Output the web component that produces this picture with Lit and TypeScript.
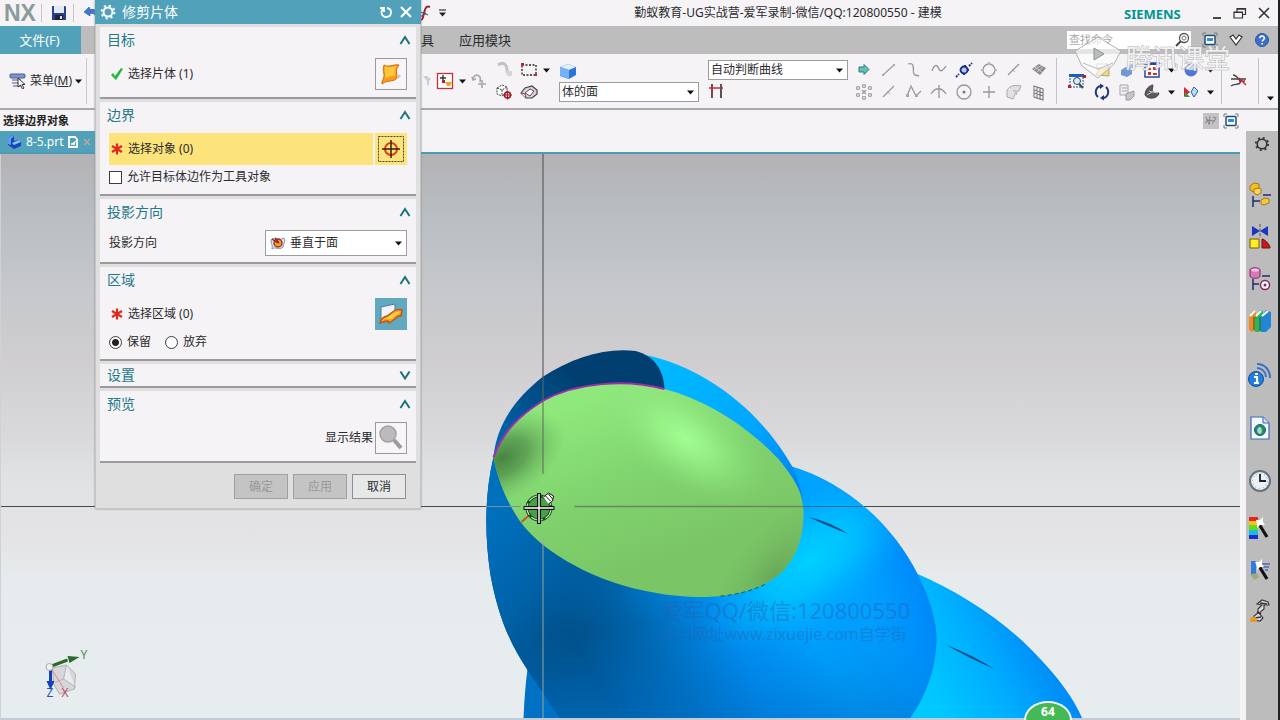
import { LitElement, html, svg, css, TemplateResult } from "lit";
import { customElement } from "lit/decorators.js";

type Glyph = [number, number, TemplateResult];

const glyphs: Record<string, Glyph> = {
  save: [16, 16, svg`<path d="M1 1h13l1 1v13H1z" fill="#2b3f8f"/><path d="M3 1h10v7H3z" fill="#e4e8f4"/><path d="M4 10h8v5H4z" fill="#1c2238"/><path d="M9 11h2v3H9z" fill="#dfe3ee"/>`],
  undo: [18, 16, svg`<path d="M6 2 1 7l6 4V8.500c4-.5 6 1 6 6 5-7 1-11-6-10z" fill="#3d78cf" stroke="#2a56a5" stroke-width=".6"/>`],
  script: [14, 18, svg`<path d="M1 16c4 1 4-3 5-7s2-8 6-6" fill="none" stroke="#a81e2c" stroke-width="2"/><path d="M3 8l7 3M2 13l6-4" stroke="#555" stroke-width="1.200"/>`],
  qcaret: [9, 8, svg`<path d="M1 1h7" stroke="#333" stroke-width="1.200"/><path d="M1 3.500h7L4.500 7.500z" fill="#222"/>`],
  caret: [7, 5, svg`<path d="M0 .5h7L3.500 4.500z" fill="#111"/>`],
  min: [12, 14, svg`<path d="M2 12h8" stroke="#333" stroke-width="1.800"/>`],
  restore: [14, 14, svg`<path d="M1 6h8.500v6H1zM4 6V2.500h8.500v6H10M1 6.500h8M4 3.200h8" fill="none" stroke="#333" stroke-width="1.200"/>`],
  close: [14, 14, svg`<path d="m2 2 10 10M12 2 2 12" stroke="#333" stroke-width="1.600"/>`],
  search: [16, 16, svg`<circle cx="10" cy="6" r="4.500" fill="#fff" stroke="#555" stroke-width="1.300"/><circle cx="10" cy="6" r="2" fill="none" stroke="#777"/><path d="m7 9-5 5" stroke="#444" stroke-width="2"/>`],
  full: [16, 16, svg`<path d="M1 4V1h3M12 1h3v3M15 12v3h-3M4 15H1v-3" fill="none" stroke="#777"/><rect x="3" y="3.500" width="10" height="9" rx="1" fill="#fff" stroke="#234a6d" stroke-width="1.500"/><path d="M5 6h6v3H5z" fill="#2b8be6"/>`],
  chevron: [16, 14, svg`<path d="m2 4 3-2 3 4 3-4 3 2-6 8z" fill="#fff" stroke="#333" stroke-width="1.200"/>`],
  help: [16, 16, svg`<circle cx="8" cy="8" r="6.500" fill="#3b6fc9" stroke="#2a55a5"/><path d="M5.800 6.300c0-3 4.600-3 4.600-.2 0 1.700-2.200 1.700-2.200 3.500M8.200 11v1.600" fill="none" stroke="#fff" stroke-width="1.600"/>`],
  menu: [18, 16, svg`<rect x="1" y="1" width="15" height="4" rx="1" fill="#7d93c9" stroke="#4b5f94"/><path d="M3 7h9M3 10h8M4 13h8" stroke="#8f8aa5" stroke-width="1.500"/><path d="M9 5v9l2.500-2 2 4 1.500-1-2-3.500h3z" fill="#fff" stroke="#222" stroke-width=".9"/>`],
  partcube: [16, 16, svg`<path d="M2 4l4-3 2 1v5l5-1 2 2v4l-7 3-6-4z" fill="#1747b8"/><path d="m2 4 4-3 2 1-3 3v6l-3-1z" fill="#5e9bf0"/><path d="m6 9 7-3 2 2-7 3z" fill="#8fbcfb"/>`],
  edit: [12, 12, svg`<path d="M2 1h6l2 2v8H2z" fill="none" stroke="#fff" stroke-width="1.800"/><path d="m5 8 6-4M4 8h4" stroke="#fff" stroke-width="1.400"/>`],
  tabx: [8, 10, svg`<path d="m1 2 6 6M7 2 1 8" stroke="#b6a79f" stroke-width="1.500"/>`],
  snap: [18, 18, svg`<rect x="1.500" y="1.500" width="15" height="15" fill="#fff" stroke="#c3323c" stroke-width="1.300"/><path d="M4 6h6M7 3v6" stroke="#333" stroke-width="1.400"/><path d="M9 10h7l-2 4h-3z" fill="#efa522"/><path d="M6 8h3v3H6z" fill="#b32230"/>`],
  funnel: [10, 14, svg`<path d="M0 2h4l4 3-2 2v5l-2-2V7z" fill="#cfcdd2"/>`],
  arcplus: [18, 18, svg`<path d="M2 7c1-6 9-5 7 3" fill="none" stroke="#a8a6ab" stroke-width="1.600"/><path d="M11 8v8M7 12h8M1 5l1 3 3-1" stroke="#a8a6ab" stroke-width="1.600" fill="none"/>`],
  arcgrey: [18, 18, svg`<path d="M3 4c6-4 10 0 9 8" fill="none" stroke="#c3c1c6" stroke-width="3"/><path d="M11 10h6v5h-5z" fill="#d6d4d9"/>`],
  cubetarget: [18, 18, svg`<path d="m2 5 5-3 5 2v6l-5 3-5-2zM2 5l5 2 5-3M7 7v6" fill="#fff" stroke="#444" stroke-width="1" stroke-dasharray="2 1"/><circle cx="12.500" cy="12" r="3" fill="none" stroke="#a31a2a" stroke-width="1.600"/><path d="M12.500 7.500v9M8 12h9" stroke="#a31a2a" stroke-width="1.200"/>`],
  selrect: [18, 18, svg`<path d="M2 4h14v10H2z" fill="none" stroke="#222" stroke-width="1.300" stroke-dasharray="2 1.500"/><path d="M1 2h3v3H1zM14 13h3v2h-3z" fill="#b82532"/>`],
  solid: [18, 18, svg`<path d="M1 10 5 5l7-2 5 4v4l-5 4H6z" fill="#d8d6da" stroke="#444" stroke-width="1.200"/><path d="m5 10 5-4 4 2-4 5zM1 10l4 1 1 4" fill="#fff" stroke="#7c3a46"/>`],
  bluecube: [18, 18, svg`<path d="m1 5 8-3 8 3v8l-7 4-9-3z" fill="#2d74d8"/><path d="m1 5 8-3 8 3-7 3z" fill="#e1effc"/><path d="m1 5 9 3v9l-9-3z" fill="#76b2f5"/>`],
  hh: [16, 16, svg`<path d="M4 1v14M13 1v14" stroke="#444" stroke-width="1.800"/><path d="M4 4v8M1 5h14" stroke="#c0303c" stroke-width="1.400"/>`],
  arrow: [18, 18, svg`<path d="M4 6h5V3.500l5 5-5 5V11H4z" fill="#63bfb7" stroke="#2c7d7b"/>`],
  line: [18, 18, svg`<path d="m3 14 11-10" stroke="#9c9a9e" stroke-width="1.200"/><path d="M2 13h2v2H2zM13 3h2v2h-2z" fill="#aaa"/>`],
  line2: [18, 18, svg`<path d="m3 14 11-11" stroke="#9c9a9e" stroke-width="1.300"/><path d="m7 8 3 3" stroke="#aaa"/>`],
  scurve: [18, 18, svg`<path d="M3 3c9-3 3 10 7 11l4 1" fill="none" stroke="#98969a" stroke-width="1.300"/>`],
  wave: [18, 18, svg`<path d="M2 10C5 1 8 5 9 8s4 2 7-3" fill="none" stroke="#98969a" stroke-width="1.400"/>`],
  zig: [18, 18, svg`<path d="M2 13 6 3l5 10 5-5" fill="none" stroke="#98969a" stroke-width="1.300"/><path d="M1 11h3v3H1zM10 11h3v3h-3zM5 3h2v2H5z" fill="#aaa8ac"/>`],
  arcplus2: [18, 18, svg`<path d="M1 11c4-7 11-7 15 0M9 2v13" fill="none" stroke="#98969a" stroke-width="1.300"/>`],
  spiro: [18, 18, svg`<circle cx="9" cy="9" r="3.500" fill="#aecbe7" stroke="#1d2a8c" stroke-width="1.800"/><path d="m5 9 5-5 4 5-5 5z" fill="none" stroke="#1d2a8c"/><path d="m1 16 3-3M14 5l3-3" stroke="#1d2a8c" stroke-width="2" stroke-dasharray="2 1" fill="none"/>`],
  circle: [18, 18, svg`<circle cx="9" cy="9" r="6" fill="none" stroke="#98969a" stroke-width="1.300"/><path d="M8 1h2v3H8zM1 8h3v2H1zM14 8h3v2h-3zM8 14h2v3H8z" fill="#bbb9bd"/>`],
  circledot: [18, 18, svg`<circle cx="9" cy="9" r="7" fill="none" stroke="#98969a" stroke-width="1.300"/><circle cx="9" cy="9" r="1.500" fill="#777"/>`],
  plus: [18, 18, svg`<path d="M9 3v12M3 9h12" stroke="#98969a" stroke-width="1.300"/>`],
  burst: [18, 18, svg`<g fill="none" stroke="#98969a" stroke-width="1.200"><path d="m7 7 4 4M11 7l-4 4"/><circle cx="3" cy="5" r="1.500"/><circle cx="9" cy="3" r="1.500"/><circle cx="15" cy="5" r="1.500"/><circle cx="3" cy="12" r="1.500"/><circle cx="9" cy="15" r="1.500"/><circle cx="15" cy="12" r="1.500"/></g>`],
  surf: [18, 18, svg`<path d="m2 8 7-5 7 4-6 7z" fill="#8b898d"/><path d="m4 9 8-5M7 11l7-6M5 6l7 5" stroke="#cfcdd2"/>`],
  surfcurl: [18, 18, svg`<path d="M2 7c4-5 8-5 14-4l-2 5c-3-1-4 4-6 8l-6-2z" fill="#e2e0e4" stroke="#a9a7ab"/><path d="M8 8c3-1 5 2 3 4" fill="none" stroke="#a9a7ab"/>`],
  mesh: [18, 18, svg`<path d="M4 3l9 3v11l-9-3zM4 7l9 3M4 10l9 3M7 4v11M10 5v11" fill="none" stroke="#7c7a7e" stroke-width="1.100"/>`],
  fitwin: [18, 18, svg`<path d="M2 3h13v12H2z" fill="#eef5fb" stroke="#2a4a8e" stroke-dasharray="2 1"/><path d="M1 2h15v3H1z" fill="#1f5fbc"/><circle cx="9" cy="9" r="3.500" fill="#d7ecf8" stroke="#344"/><path d="m11 12 4 4" stroke="#344" stroke-width="1.800"/><path d="M0 13h3v3H0zM15 3h3v3h-3z" fill="#b9202e"/>`],
  folder: [18, 18, svg`<path d="m3 14 5-9h8v10z" fill="#efd986" stroke="#b7a46a"/><path d="M4 3h10v4H4z" fill="#fff" stroke="#aaa"/>`],
  refresh: [18, 18, svg`<path d="M5 14A6.500 6.500 0 0 1 7 3M13 4a6.500 6.500 0 0 1-2 11" fill="none" stroke="#22387c" stroke-width="1.900"/><path d="m7 .5 4 2.500-4 3zM11 12l-4 3 4 2.500z" fill="#22387c"/>`],
  bluebox: [18, 18, svg`<path d="m3 9 5-3 6 2v5l-5 3-6-2z" fill="#7198d5"/><path d="m9 5 5-2 2 1v4l-3 2z" fill="#a7c1e8"/>`],
  sheets: [18, 18, svg`<path d="M2 2h8v10H2zM4 5h5M4 8h5" fill="#eee" stroke="#a5a3a8"/><path d="m8 11 8-3v5l-4 4H8z" fill="#c7c5ca" stroke="#9b999e"/>`],
  redgrid: [18, 18, svg`<path d="M2 2h14v14H2z" fill="#fff" stroke="#27479d" stroke-width="1.500"/><path d="M2 3h14" stroke="#27479d" stroke-width="2"/><path d="M4 7h4v2H4zM10 6h4v3h-4zM5 11h3v3H5zM10 12h4v2h-4z" fill="#cf2e3a"/>`],
  fan: [18, 18, svg`<path d="M2 12C2 6 7 2 10 2l-1 7 7 1c-1 6-11 7-14 2z" fill="#5c5a5e" stroke="#333" stroke-width=".8"/><path d="m4 12 5-3 6 1M6 8l3 1" stroke="#c9c7cb" fill="none"/>`],
  sphere: [18, 18, svg`<circle cx="9" cy="9" r="6.500" fill="#5276d8"/><path d="M3 7c4-5 9-5 12 0-4 3-8 3-12 0z" fill="#c8d8f8"/>`],
  compare: [18, 18, svg`<path d="m2 4 6 5-6 5z" fill="#c92c33"/><path d="m3 9 5 5H3z" fill="#2a9d4a"/><path d="m12 4 4 4-4 6-3-5z" fill="#b8dcf4" stroke="#2360a8"/>`],
  trim: [18, 18, svg`<path d="M4 3c4 0 5 4 8 7M2 7h9l6 0M2 14c4-3 7 0 10-4" fill="none" stroke="#444" stroke-width="1.400"/><path d="m10 6 7 7M16 9l-6 0" stroke="#c2252f" stroke-width="1.400"/>`],
  noise: [16, 16, svg`<path d="M0 0h16v16H0z" fill="#c4c2c6"/><path d="m3 4 3 7M7 3l-1 9M10 4l3 1-4 6M3 7l9 1M2 10l4-3" stroke="#858387" fill="none"/>`],
  gearDark: [18, 18, svg`<circle cx="9" cy="9" r="4.800" fill="none" stroke="#333" stroke-width="1.600"/><circle cx="9" cy="9" r="6.200" fill="none" stroke="#333" stroke-width="1.800" stroke-dasharray="2 2.870"/>`],
  gear: [16, 16, svg`<circle cx="8" cy="8" r="4.500" fill="none" stroke="#fff" stroke-width="2"/><circle cx="8" cy="8" r="6.400" fill="none" stroke="#fff" stroke-width="2" stroke-dasharray="2.200 2.826"/>`],
  reset: [14, 14, svg`<path d="M1 3h4v4M4 4c-3 3-1 8 3 8 6 0 7-8 1-9" fill="none" stroke="#fff" stroke-width="1.800"/>`],
  closeW: [14, 14, svg`<path d="m2 2 10 10M12 2 2 12" stroke="#fff" stroke-width="2.200"/>`],
  up: [12, 10, svg`<path d="m1.500 9 4.500-7 4.500 7" fill="none" stroke="#19727e" stroke-width="2"/>`],
  down: [12, 10, svg`<path d="m1.500 1.500 4.500 7 4.500-7" fill="none" stroke="#19727e" stroke-width="2"/>`],
  check: [14, 14, svg`<path d="m1 8 2-2 2 3 6-8 2 1-7 11z" fill="#22b93c"/>`],
  star: [14, 14, svg`<path d="M7 1.500v11M2 4l10 6M12 4 2 10" stroke="#e0281f" stroke-width="2.200"/>`],
  sheet: [26, 26, svg`<path d="M6 4c5 3 9-1 15 0-4 5-2 8-2 13-4 5-9 1-15 6-1-3 3-6 2-10s-1-5 0-9z" fill="#f79a1e" stroke="#d5690c"/><path d="M7 5c5 3 8 0 12 0-3 4-2 7-2 10-4-1-7 2-10 2 1-5-1-7 0-12z" fill="#ffc83a"/><path d="m20 13 3 2-3 3z" fill="#c9c7cb"/>`],
  target: [28, 28, svg`<path d="M1.500 1.500h25v25h-25z" fill="none" stroke="#4a4433" stroke-dasharray="2 1"/><circle cx="14" cy="14" r="6" fill="none" stroke="#d2431f" stroke-width="2"/><path d="M14 5v18M5 14h18" stroke="#3c1a10" stroke-width="1.500"/>`],
  region: [32, 32, svg`<path d="M6 9 20 6v14L6 23z" fill="#eef4fa" stroke="#5079a3"/><path d="M5 25c1-5 4-6 7-7l7-5c3-2 5-2 8-1l-1 6c-3-1-4 1-6 3l-6 4-1-2c-3 0-5 1-8 2z" fill="#f7a91f" stroke="#c4501c" stroke-width="1.500"/><path d="m10 21 11-7 4 0-9 7z" fill="#ffd03f"/>`],
  mag: [32, 32, svg`<circle cx="13" cy="12" r="8" fill="#bcbabd" stroke="#a3a1a4" stroke-width="1.500"/><path d="m19 18 7 8" stroke="#9c9a9d" stroke-width="4"/>`],
  normal: [16, 16, svg`<path d="M1 5c3-4 6 2 13-2 2 4-1 6-1 9-5 4-7-1-11 2 1-4-1-5-1-9z" fill="#d9e5f2" stroke="#7893b5"/><circle cx="8" cy="8" r="4" fill="#f2a21d" stroke="#a8301f" stroke-width="1.400"/><path d="m2 4 6 4M5 3l4 5" stroke="#8b2430" stroke-width="1.400"/>`],
  asm: [24, 26, svg`<path d="m2 4 4-3 5 1v6l-5 2-4-2z" fill="#f2bf27" stroke="#a87a0c"/><path d="m6 7 4-1 3 1v4l-4 2-3-2z" fill="#ffd85b" stroke="#a87a0c"/><path d="M5 14v11M5 19h7M15 13h8" stroke="#222a6c" stroke-width="1.500"/><path d="m13 18 4-2 4 1v4l-5 2-3-1z" fill="#f2c93a" stroke="#a87a0c"/>`],
  constraint: [24, 26, svg`<path d="M4 2v10l8-5 8 5V2l-8 5z" fill="#1b35c0"/><path d="M12 0v14" stroke="#555" stroke-dasharray="3 1.500"/><path d="M2 15h9v9H2z" fill="#ffee22" stroke="#735c0c"/><path d="M14 15c2 0 8 5 8 9h-8z" fill="#c9181e" stroke="#6d1010"/>`],
  partnav: [24, 26, svg`<path d="M2 4c0-3 10-3 10 0v6c0 3-10 3-10 0z" fill="#d778b7" stroke="#7f2763"/><ellipse cx="7" cy="4" rx="4" ry="1.600" fill="#f5c6e5"/><path d="M5 13v11M5 18h6M14 10h8" stroke="#222a6c" stroke-width="1.500"/><circle cx="17" cy="19" r="4.500" fill="#fff" stroke="#7f2763" stroke-width="1.500"/><circle cx="17" cy="19" r="1.500" fill="#7f2763"/>`],
  books: [24, 26, svg`<path d="m1 8 4-5 3 1v18l-4 2-3-2z" fill="#ee8a20"/><path d="m7 8 5-6 3 1v18l-4 3H7z" fill="#2fb35c"/><path d="m13 8 5-6 5 2v15l-5 5h-5z" fill="#2585d5"/><path d="m2 8 5-5M8 8l5-5M14 8l6-5" stroke="#fff" stroke-width="2"/><path d="M6 9v13M12 9v14" stroke="#145a3a"/>`],
  info: [24, 26, svg`<path d="M9 2c8 0 13 6 13 14M9 6c5 0 9 4 9 9" fill="none" stroke="#3f6fc5" stroke-width="2"/><circle cx="8" cy="17" r="7.500" fill="#1f7fdc" stroke="#0f4d9c"/><path d="M6 15h3v6M6 21h5M7 12h3" stroke="#fff" stroke-width="2.200" fill="none"/>`],
  webdoc: [24, 26, svg`<path d="M3 2h12l6 6v16H3z" fill="#f3f8ff" stroke="#3b69b4" stroke-width="1.200"/><path d="M15 2v6h6" fill="#cfe0f5" stroke="#3b69b4"/><circle cx="12" cy="15" r="5.500" fill="#2a8c53" stroke="#1e5c86"/><path d="M10 13c3-3 5 2 3 6-3 0-5-3-3-6z" fill="#9fd8ea"/>`],
  clock: [24, 26, svg`<circle cx="12" cy="13" r="10" fill="#eaf1f5" stroke="#64707a" stroke-width="2"/><circle cx="12" cy="13" r="7.500" fill="none" stroke="#8b979f" stroke-dasharray="1 2.930"/><path d="M12 6v7h6" fill="none" stroke="#222" stroke-width="1.800"/>`],
  rainbow: [24, 26, svg`<path d="M1 2h9v4H1z" fill="#e8221c"/><path d="M1 6h9v4H1z" fill="#f6c519"/><path d="M1 10h9v5H1z" fill="#61dd1e"/><path d="M1 15h9v5H1z" fill="#1bbbe8"/><path d="M1 20h9v4H1z" fill="#1b2bd0"/><path d="m11 9 8 13" stroke="#111" stroke-width="3.200"/><path d="m8 5 4 0 3-3 0 5 2 3-5 0-3 3 0-4z" fill="#fff"/>`],
  wandbox: [24, 26, svg`<path d="M3 4h5v14H3z" fill="#2f7ed7"/><path d="M3 18c2-3 4 0 6-2l2 4-5 3z" fill="#a5a878"/><path d="M12 7h10M15 10h6M17 13h3" stroke="#4f66b4" stroke-width="1.600"/><path d="m11 9 8 13" stroke="#111" stroke-width="3.200"/><path d="m7 5 4 0 3-3 0 5 2 3-4 0-3 3 0-4z" fill="#fff"/>`],
  robot: [24, 26, svg`<path d="m9 5 5-4 6 2 1 3-5 0 0 4-5 4 4 5-3 3-6-1 0-4 4-3 0-4 4-4z" fill="#dcdadd" stroke="#3c3a3e" stroke-width="1.200"/><path d="m12 4 7 1M9 13l4 2M7 19l6-1" stroke="#333" stroke-width="1.600"/><path d="M2 20c1-3 6-3 7 0v3H2z" fill="#e59a25"/>`],
};

const ico = (name: string) => {
  const [w, h, body] = glyphs[name];
  return html`<svg class="ico" width=${w} height=${h} viewBox="0 0 ${w} ${h}" aria-hidden="true">${body}</svg>`;
};
const tool = (name: string) => html`<button class="tool" aria-label=${name}>${ico(name)}</button>`;
const pair = (a: string, b: string) => html`<div class="pair">${tool(a)}${tool(b)}</div>`;

const facePath =
  "M493 457C503 430 520 415 542 401C576 382 626 379 664 389C706 400 748 427 778 459C795 480 802 492 803 510C804 548 788 574 760 586C738 595 720 597 697 597C651 596 606 583 577 567C550 553 532 538 520 522C506 502 497 479 493 457Z";
const bodyPath =
  "M790 466C845 482 893 525 918 576C930 600 936 622 936 640C935 672 924 698 909 719H560L527 670C507 640 497 612 490 575C484 535 484 495 493 457L640 420Z";

const scene = svg`
  <defs>
    <linearGradient id="lobe3" gradientUnits="userSpaceOnUse" x1="925" y1="690" x2="1040" y2="630">
      <stop offset="0" stop-color="#00c9ff"/><stop offset=".5" stop-color="#00aeff"/><stop offset="1" stop-color="#0088f6"/>
    </linearGradient>
    <linearGradient id="base" gradientUnits="userSpaceOnUse" x1="610" y1="700" x2="810" y2="570">
      <stop offset="0" stop-color="#004c82"/><stop offset=".25" stop-color="#0063a8"/><stop offset=".55" stop-color="#008aea"/><stop offset=".85" stop-color="#00a6ff"/><stop offset="1" stop-color="#00a2ff"/>
    </linearGradient>
    <linearGradient id="fall" gradientUnits="userSpaceOnUse" x1="790" y1="610" x2="800" y2="718">
      <stop offset="0" stop-color="#0087f5" stop-opacity="0"/><stop offset="1" stop-color="#0076d4" stop-opacity=".6"/>
    </linearGradient>
    <linearGradient id="right" gradientUnits="userSpaceOnUse" x1="860" y1="600" x2="936" y2="575">
      <stop offset="0" stop-color="#008cff" stop-opacity="0"/><stop offset="1" stop-color="#0080f5"/>
    </linearGradient>
    <radialGradient id="glow" gradientUnits="userSpaceOnUse" cx="0" cy="0" r="1" gradientTransform="translate(810 560) rotate(-38) scale(125 62)">
      <stop offset="0" stop-color="#00d0ff"/><stop offset=".4" stop-color="#00c4ff" stop-opacity=".85"/><stop offset="1" stop-color="#00acff" stop-opacity="0"/>
    </radialGradient>
    <linearGradient id="leftside" gradientUnits="userSpaceOnUse" x1="490" y1="520" x2="610" y2="620">
      <stop offset="0" stop-color="#0070bd"/><stop offset=".5" stop-color="#0061a6"/><stop offset="1" stop-color="#005a9a" stop-opacity="0"/>
    </linearGradient>
    <linearGradient id="rim" gradientUnits="userSpaceOnUse" x1="655" y1="360" x2="800" y2="500">
      <stop offset="0" stop-color="#00baff"/><stop offset=".55" stop-color="#00a8ff"/><stop offset="1" stop-color="#007ff0"/>
    </linearGradient>
    <linearGradient id="cap" gradientUnits="userSpaceOnUse" x1="493" y1="450" x2="570" y2="370">
      <stop offset="0" stop-color="#006ab3"/><stop offset=".5" stop-color="#005290"/><stop offset="1" stop-color="#003f6f"/>
    </linearGradient>
    <linearGradient id="green" gradientUnits="userSpaceOnUse" x1="620" y1="390" x2="680" y2="560">
      <stop offset="0" stop-color="#8fe87c"/><stop offset=".5" stop-color="#80d36e"/><stop offset="1" stop-color="#7ac566"/>
    </linearGradient>
    <radialGradient id="shine" gradientUnits="userSpaceOnUse" cx="0" cy="0" r="1" gradientTransform="translate(684 438) rotate(35) scale(95 48)">
      <stop offset="0" stop-color="#a0ff92"/><stop offset=".35" stop-color="#98f488" stop-opacity=".8"/><stop offset="1" stop-color="#88dc78" stop-opacity="0"/>
    </radialGradient>
    <radialGradient id="shade" gradientUnits="userSpaceOnUse" cx="0" cy="0" r="1" gradientTransform="translate(502 458) rotate(-30) scale(68 42)">
      <stop offset="0" stop-color="#478443"/><stop offset=".4" stop-color="#55954e" stop-opacity=".8"/><stop offset="1" stop-color="#6cb861" stop-opacity="0"/>
    </radialGradient>
    <radialGradient id="edge" gradientUnits="userSpaceOnUse" cx="0" cy="0" r="1" gradientTransform="translate(775 575) rotate(-50) scale(90 44)">
      <stop offset="0" stop-color="#68a957"/><stop offset="1" stop-color="#74b963" stop-opacity="0"/>
    </radialGradient>
  </defs>
  <path d="M0 506.500H1240M542.500 154V718" stroke="#4a4a4c"/>
  <path d="M915 573C960 592 1005 622 1036 655C1060 680 1074 700 1082 719H880Z" fill="url(#lobe3)"/>
  <path d="M946 645Q972 655 994 669Q968 658 946 645Z" fill="#054c83"/>
  <path d="M527 669Q524 692 523 719H570L540 660Z" fill="#0071c4"/>
  ${["base", "fall", "right", "glow", "leftside"].map((id) => svg`<path d=${bodyPath} fill="url(#${id})"/>`)}
  <path d="M808 517Q830 522 848 534Q829 527 808 517Z" fill="#06518c"/>
  <path d="M645 355C700 366 759 408 792 467C799 482 802 494 803 510L664 400Z" fill="url(#rim)"/>
  <path d="M493 457C496 425 514 399 542 377C572 357 607 347 635 351C654 356 664 370 664 392L540 440Z" fill="url(#cap)"/>
  ${["green", "shine", "shade", "edge"].map((id) => svg`<path d=${facePath} fill="url(#${id})"/>`)}
  <path d="M493 457C503 430 520 415 542 401C576 382 626 379 664 389" fill="none" stroke="#a02cae" stroke-width="2"/>
  <path d="M720 596Q745 594 765 584" fill="none" stroke="#1c5d4a" stroke-dasharray="4 3"/>
  <g fill="none">
    <path d="M542.500 377V474" stroke="#5e6b5d"/>
    <path d="M542.500 538V718" stroke="#9aa393"/>
    <path d="M485 506.500H520" stroke="#7692a6"/>
    <path d="M574 506.500H803" stroke="#6d8560" stroke-width="1.500"/>
    <path d="M803 506.500H862" stroke="#3b6c8c"/>
    <path d="m521 522 10-9" stroke="#c05a2a" stroke-width="2"/>
  </g>
  <g fill="none">
    <circle cx="538.500" cy="508" r="12" fill="#3b9339" fill-opacity=".8" stroke="#1d4a20" stroke-width="3"/>
    <circle cx="538.500" cy="508" r="12" stroke="#b7e6b0" stroke-width="1.200" stroke-dasharray="12 3"/>
    <path d="M538.500 493v31M523 508h31" stroke="#0d1a0d" stroke-width="4"/>
    <path d="M538.500 494v29M524 508h29" stroke="#fff" stroke-width="1.400"/>
    <path d="m543 497 5-4 5 3-1 5-4 3" fill="#fff" stroke="#111"/>
    <path d="m545 496 5 5M548 494l4 5" stroke="#111"/>
  </g>
  <g class="mark">
    <text x="660" y="619" font-size="22">爱军QQ/微信:120800550</text>
    <text x="660" y="640" font-size="16">学习网址www.zixuejie.com自学街</text>
  </g>
  <g>
    <path d="m52 668 14-3 9 9-1 15-15 5-6-10zM66 665l-3 14 12 8M63 679l-8 3" fill="#d9d6da" stroke="#b4b1b6"/>
    <path d="m51 666 16-6" stroke="#2a6a2b" stroke-width="3"/><path d="m67 656 12 1-10 6z" fill="#2a6a2b"/>
    <path d="M50 668v16" stroke="#1442b8" stroke-width="3"/><path d="m46 681 8 0-4 9z" fill="#1442b8"/>
    <path d="m51 669 12 19" stroke="#d58a93"/>
    <circle cx="49" cy="667" r="3.500" fill="#f2f2f4" stroke="#aaa"/>
    <g class="axis"><text x="80" y="659" fill="#4f8a52">Y</text><text x="46" y="697" fill="#2450c0">Z</text><text x="61" y="697" fill="#c04a5c">X</text></g>
  </g>
`;

@customElement("app-root")
export class AppRoot extends LitElement {
  static styles = css`
    :host { display: block; height: 100vh; font: 12px/16px "Noto Sans", "Noto Sans CJK SC", sans-serif; color: #2c2b2e; }
    * { box-sizing: border-box; }
    button, select, input { font: inherit; color: inherit; margin: 0; }
    button { border: 0; padding: 0; background: none; }
    .ico { display: block; flex: none; }
    .app { position: relative; height: 100%; display: flex; flex-direction: column; background: #f5f3f6; border-right: 2px solid #1d2225; overflow: hidden; }
    .titlebar { height: 26px; flex: none; display: flex; align-items: center; }
    .quick { width: 452px; flex: none; display: flex; align-items: center; padding-left: 4px; }
    .nx { font: bold 23px/26px "Liberation Sans", sans-serif; color: #8a9b9b; width: 37px; }
    .vsep { width: 1px; height: 18px; background: #c4c3c6; margin-right: 9px; }
    .undo { margin-left: 6px; }
    .quickend { margin-left: auto; display: flex; align-items: center; gap: 6px; padding-right: 5px; }
    .title { flex: 1; text-align: center; white-space: nowrap; }
    .brand { font: bold 13px/16px "Noto Sans", sans-serif; color: #009590; width: 87px; padding-top: 2px; }
    .winbtns { display: flex; gap: 10px; padding-right: 7px; }
    .tabs { height: 28px; flex: none; display: flex; align-items: center; background: #bdbdbd; font-size: 13px; line-height: 18px; }
    .file { width: 81px; height: 28px; background: #50a1b9; color: #fff; padding-right: 2px; }
    .tabgap { width: 327px; flex: none; }
    .tab { margin-right: 25px; white-space: nowrap; }
    .tabright { margin-left: auto; display: flex; align-items: center; gap: 10px; padding-right: 8px; }
    .find { display: flex; align-items: center; width: 124px; height: 18px; background: #fff; padding-right: 1px; margin-right: 1px; }
    .find input { flex: 1; min-width: 0; border: 0; padding: 0 2px; background: none; font-size: 11px; height: 18px; outline: 0; }
    .find input::placeholder { color: #a9a7aa; opacity: 1; }
    .ribbon { height: 56px; flex: none; display: flex; align-items: center; border-bottom: 2px solid #a9a8aa; }
    .menu { display: flex; align-items: center; gap: 3px; width: 87px; height: 46px; padding-left: 9px; border-right: 1px solid #c9c8ca; flex: none; white-space: nowrap; }
    .mnem { text-decoration: underline; }
    .under { width: 336px; flex: none; }
    .tool { width: 24px; height: 22px; display: flex; align-items: center; justify-content: center; flex: none; }
    .pair { display: flex; flex-direction: column; flex: none; }
    .drops { margin: 0 3px; }
    .drop { margin: 0 2px; }
    .row { display: flex; align-items: center; height: 22px; }
    .sel { gap: 2px; }
    .stack { display: flex; flex-direction: column; flex: none; margin: 0 8px 0 1px; }
    .combo { position: relative; display: block; width: 140px; }
    .combo select { appearance: none; width: 100%; height: 20px; border: 1px solid #9d9c9f; border-radius: 0; background: #fff; padding: 0 2px; display: block; }
    .combo .ico { position: absolute; right: 5px; top: 50%; margin-top: -2px; pointer-events: none; }
    .curves { display: flex; gap: 1px; margin-left: -4px; }
    .views { margin-left: auto; display: flex; align-items: center; gap: 1px; height: 46px; border-left: 1px solid #c3c2c5; padding-left: 8px; }
    .vgroup { display: flex; align-items: center; height: 46px; border-left: 1px solid #c3c2c5; padding: 0 4px; margin-left: 4px; }
    .more { align-self: flex-end; margin: 0 0 3px 4px; }
    .prompt { height: 21px; flex: none; display: flex; align-items: center; padding: 0 39px 0 3px; font-size: 11px; font-weight: 700; color: #222; }
    .prompticons { margin-left: auto; display: flex; gap: 4px; }
    .work { flex: 1; min-height: 0; display: flex; }
    .docs { flex: 1; min-width: 0; display: flex; flex-direction: column; }
    .doctabs { height: 23px; flex: none; border-bottom: 2px solid #4d9ab4; }
    .doctab { width: 97px; height: 21px; background: #50a1b9; color: #fff; display: flex; align-items: center; gap: 4px; padding-left: 6px; white-space: nowrap; }
    .view { flex: 1; min-height: 0; border-bottom: 2px solid #c3ccd6; border-left: 1px solid #cdd2d6; background: linear-gradient(#b3b2b4 0, #b9bfc3 12%, #c6c8cb 24%, #cfcdd0 36%, #d9d9db 50%, #e0e3e5 58%, #e4e3e5 68%, #e6ebed 76%, #e7ecee 100%); }
    .scene { display: block; width: 100%; height: 100%; }
    .mark { fill: #2a5fae; opacity: .42; font-family: "Noto Sans", "Noto Sans CJK SC", sans-serif; }
    .axis { font: 12px "Noto Sans", sans-serif; }
    .rail { width: 32px; margin-left: 6px; flex: none; background: #bcbcbc; display: flex; flex-direction: column; align-items: stretch; }
    .slot { height: 42px; display: flex; align-items: center; justify-content: center; padding-right: 4px; }
    .first { height: 26px; margin-bottom: 17px; padding: 0; }
    .tall { height: 53px; }
    .lead { margin-top: 6px; }
    .dialog { position: absolute; left: 95px; top: 0; width: 326px; background: #dfdfe0; border: 1px solid #c3c5c8; border-top: 0; box-shadow: 0 0 2px #8a8a8c; display: flex; flex-direction: column; }
    .dhead { height: 24px; background: #50a1b9; color: #fff; display: flex; align-items: center; padding: 0 8px 0 5px; gap: 6px; margin: 0 -1px 3px; font-size: 14px; line-height: 24px; }
    .dhead h2 { font: inherit; margin: 0; flex: 1; }
    .sect { margin: 0 4px 3px; background: #f5f3f6; border-bottom: 2px solid #9b9a9c; }
    .shead { height: 26px; width: 100%; display: flex; align-items: center; justify-content: space-between; padding: 0 5px 0 7px; font-size: 14px; line-height: 20px; color: #237889; }
    .short { height: 22px; }
    .sbody { padding: 5px 9px 7px; }
    .tight { padding-bottom: 5px; }
    .item { display: flex; align-items: center; height: 32px; }
    .item .name { flex: 1; display: flex; align-items: center; gap: 4px; height: 32px; padding-left: 1px; }
    .hot { background: #fde37c; }
    .square { width: 32px; height: 32px; display: flex; align-items: center; justify-content: center; border: 1px solid #9b9a9d; background: #f7f5f8; margin-left: 2px; }
    .plain { border: 0; background: #fde37c; }
    .active { border: 0; background: #62a8bf; }
    .opt { display: flex; align-items: center; height: 24px; gap: 14px; }
    .opt label { display: flex; align-items: center; gap: 5px; }
    .opt input { appearance: none; width: 13px; height: 13px; border: 1px solid #3d3c40; background: #fff; }
    .opt input[type="radio"] { border-radius: 50%; }
    .opt input[type="radio"]:checked { background: radial-gradient(circle, #222 0 3px, #fff 4px); }
    .field { display: flex; align-items: center; justify-content: space-between; height: 25px; }
    .dir { width: 142px; }
    .dir select { height: 26px; padding-left: 24px; }
    .dir .kind { left: 5px; right: auto; margin-top: -8px; }
    .result { display: flex; align-items: center; justify-content: flex-end; }
    .foot { display: flex; justify-content: flex-end; gap: 5px; padding: 8px 14px 9px; }
    .foot button { width: 54px; height: 25px; border: 1px solid #8f8e91; background: #e6e7e7; }
    .foot button:disabled { background: #c4c4c5; color: #98979a; border-color: #a09fa2; }
    .wm { position: absolute; right: 48px; top: 34px; display: flex; align-items: center; gap: 4px; pointer-events: none; }
    .wm span { font: 26px/40px "Noto Sans CJK SC", sans-serif; color: rgba(255, 255, 255, .8); -webkit-text-stroke: 1px #b1b0b3; paint-order: stroke fill; }
    .badge { position: absolute; left: 82%; bottom: 0; transform: translateX(-50%); width: 48px; height: 19px; border: 2px solid #f4fbf4; border-bottom: 0; border-radius: 24px 24px 0 0 / 19px 19px 0 0; background: #45b955; color: #fff; font: bold 12px/17px "Noto Sans", sans-serif; text-align: center; }
  `;

  private section(title: string, open: boolean, body: unknown = "", extra = "") {
    return html`<section class="sect">
      <button class="shead ${open ? "" : "short"}" aria-expanded=${open}>${title}${ico(open ? "up" : "down")}</button>
      ${open ? html`<div class="sbody ${extra}">${body}</div>` : ""}
    </section>`;
  }

  private dialog() {
    return html`<div class="dialog" role="dialog" aria-labelledby="dt">
      <header class="dhead">${ico("gear")}<h2 id="dt">修剪片体</h2><button>${ico("reset")}</button><button>${ico("closeW")}</button></header>
      ${this.section("目标", true, html`<div class="item"><span class="name">${ico("check")}选择片体 (1)</span><button class="square">${ico("sheet")}</button></div>`)}
      ${this.section("边界", true, html`
        <div class="item"><span class="name hot">${ico("star")}选择对象 (0)</span><button class="square plain">${ico("target")}</button></div>
        <div class="opt"><label><input type="checkbox" />允许目标体边作为工具对象</label></div>`, "tight")}
      ${this.section("投影方向", true, html`<div class="field"><label for="dir">投影方向</label>
        <span class="combo dir"><svg class="ico kind" width="16" height="16" viewBox="0 0 16 16">${glyphs.normal[2]}</svg><select id="dir"><option>垂直于面</option></select>${ico("caret")}</span></div>`)}
      ${this.section("区域", true, html`
        <div class="item"><span class="name">${ico("star")}选择区域 (0)</span><button class="square active">${ico("region")}</button></div>
        <div class="opt"><label><input type="radio" name="keep" checked />保留</label><label><input type="radio" name="keep" />放弃</label></div>`, "tight")}
      ${this.section("设置", false)}
      ${this.section("预览", true, html`<div class="result"><label for="show">显示结果</label><button id="show" class="square">${ico("mag")}</button></div>`)}
      <footer class="foot"><button disabled>确定</button><button disabled>应用</button><button>取消</button></footer>
    </div>`;
  }

  render() {
    const drops = html`<div class="pair drops"><div class="row">${ico("caret")}</div><div class="row">${ico("caret")}</div></div>`;
    return html`<div class="app">
      <header class="titlebar">
        <div class="quick"><span class="nx">NX</span><span class="vsep"></span>${ico("save")}<span class="vsep undo"></span>${ico("undo")}
          <span class="quickend">${ico("script")}${ico("qcaret")}</span></div>
        <div class="title">勤蚁教育-UG实战营-爱军录制-微信/QQ:120800550 - 建模</div>
        <div class="brand">SIEMENS</div>
        <div class="winbtns"><button>${ico("min")}</button><button>${ico("restore")}</button><button>${ico("close")}</button></div>
      </header>
      <nav class="tabs">
        <button class="file">文件(F)</button><span class="tabgap"></span><button class="tab">工具</button><button class="tab">应用模块</button>
        <div class="tabright"><label class="find"><input placeholder="查找命令" aria-label="查找命令" />${ico("search")}</label>
          <button>${ico("full")}</button><button>${ico("chevron")}</button><button>${ico("help")}</button></div>
      </nav>
      <div class="ribbon">
        <button class="menu">${ico("menu")}<span>菜单(<span class="mnem">M</span>)</span>${ico("caret")}</button>
        <span class="under"></span>
        ${ico("funnel")}${tool("snap")}<span class="drop">${ico("caret")}</span>${tool("arcplus")}
        ${pair("arcgrey", "cubetarget")}
        <div class="stack"><div class="row sel">${tool("selrect")}${ico("caret")}</div><div class="row">${tool("solid")}</div></div>
        <div class="stack"><div class="row">${ico("bluecube")}</div><label class="combo"><select aria-label="面规则"><option>体的面</option></select>${ico("caret")}</label></div>
        <div class="stack"><label class="combo"><select aria-label="曲线规则"><option>自动判断曲线</option></select>${ico("caret")}</label><div class="row">${ico("hh")}</div></div>
        <div class="curves">
          ${[["arrow", "burst"], ["line", "line2"], ["scurve", "zig"], ["wave", "arcplus2"], ["spiro", "circledot"], ["circle", "plus"], ["line2", "surfcurl"], ["surf", "mesh"]].map(([a, b]) => pair(a, b))}
        </div>
        <div class="views">${tool("fitwin")}${pair("folder", "refresh")}${pair("bluebox", "sheets")}${pair("redgrid", "fan")}
          ${drops}${pair("sphere", "compare")}${drops}
        </div>
        <div class="vgroup">${tool("trim")}</div><div class="vgroup"><span class="more">${ico("caret")}</span></div>
      </div>
      <div class="prompt">选择边界对象<span class="prompticons">${ico("noise")}${ico("full")}</span></div>
      <div class="work">
        <main class="docs">
          <div class="doctabs"><div class="doctab">${ico("partcube")}<span>8-5.prt</span>${ico("edit")}${ico("tabx")}</div></div>
          <div class="view"><svg class="scene" viewBox="0 154 1240 564" preserveAspectRatio="xMidYMid slice">${scene}</svg></div>
        </main>
        <aside class="rail">
          <button class="slot first">${ico("gearDark")}</button>
          ${["asm", "constraint", "partnav", "books"].map((n) => html`<button class="slot">${ico(n)}</button>`)}
          ${["info", "webdoc", "clock"].map((n, i) => html`<button class="slot tall ${i ? "" : "lead"}">${ico(n)}</button>`)}
          ${["rainbow", "wandbox", "robot"].map((n) => html`<button class="slot">${ico(n)}</button>`)}
        </aside>
      </div>
      ${this.dialog()}
      <div class="badge">64</div>
      <div class="wm"><svg class="ico" width="48" height="46" viewBox="0 0 48 46"><path d="M24 3 47 17 40 30 24 44 8 32 1 17z" fill="#fff" fill-opacity=".6" stroke="#b3b2b5"/><path d="m20 14 10 6-10 6z" fill="#b9bdbd" stroke="#8f9292"/><path d="m9 29 15 6 15-6" fill="none" stroke="#b9b8bb"/></svg><span>腾讯课堂</span></div>
    </div>`;
  }
}
